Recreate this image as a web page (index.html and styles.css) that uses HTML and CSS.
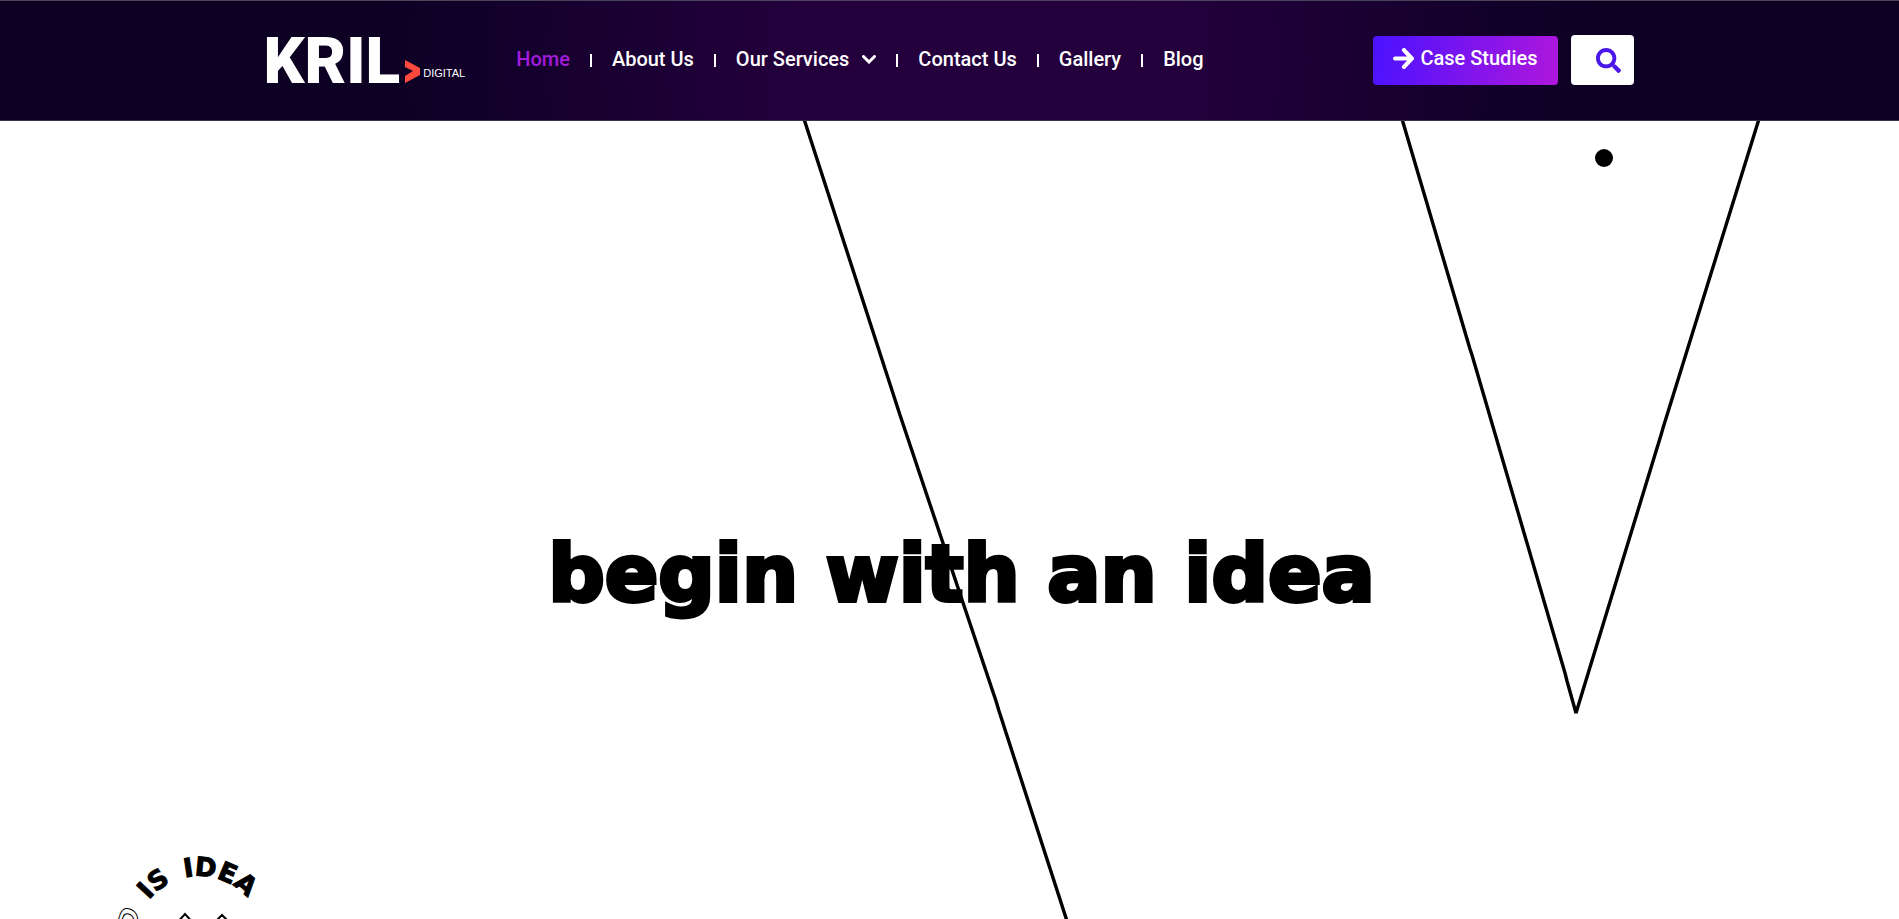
FILE: index.html
```html
<!DOCTYPE html>
<html lang="en">
  <head>
    <meta charset="UTF-8" />
    <meta name="viewport" content="width=device-width, initial-scale=1.0" />
    <title>Kril Digital</title>
    <link rel="stylesheet" href="styles.css">
  </head>
  <body>
    <!-- Header -->
    <header class="header">
      <div class="container">
        <a href="#" class="logo">
          <span class="logo-name">KRIL</span>
          <svg class="logo-arrow" viewBox="0 0 15 23" aria-hidden="true">
            <path d="M0 0 L15 8 V15 L0 23 V16 L8 11 L0 7 Z" />
          </svg>
          <span class="logo-sub">DIGITAL</span>
        </a>

        <nav class="nav">
          <ul>
            <li><a href="#" class="active">Home</a></li>
            <li><a href="#">About Us</a></li>
            <li>
              <a href="#">Our Services
                <svg class="caret" viewBox="0 0 14 9" aria-hidden="true"><path d="M1.5 1.5 L7 7 L12.5 1.5" /></svg>
              </a>
            </li>
            <li><a href="#">Contact Us</a></li>
            <li><a href="#">Gallery</a></li>
            <li><a href="#">Blog</a></li>
          </ul>
        </nav>

        <div class="actions">
          <a href="#" class="btn-case">
            <svg viewBox="0 0 20 20" aria-hidden="true"><path d="M2 10 H17 M10.5 2 L18 10 L10.5 18" /></svg>
            Case Studies
          </a>
          <button type="button" class="btn-search" aria-label="Search">
            <svg viewBox="0 0 512 512" aria-hidden="true">
              <path d="M505 442.700 405.300 343c-4.500-4.500-10.600-7-17-7H372c27.600-35.300 44-79.700 44-128C416 93.100 322.900 0 208 0S0 93.100 0 208s93.100 208 208 208c48.300 0 92.700-16.400 128-44v16.300c0 6.400 2.500 12.500 7 17l99.700 99.700c9.400 9.400 24.600 9.400 33.900 0l28.300-28.300c9.400-9.400 9.400-24.600.1-34zM208 336c-70.700 0-128-57.200-128-128 0-70.700 57.200-128 128-128 70.700 0 128 57.200 128 128 0 70.700-57.200 128-128 128z" />
            </svg>
          </button>
        </div>
      </div>
    </header>

    <!-- Hero -->
    <main class="hero">
      <svg class="hero-art" viewBox="0 0 1899 798" preserveAspectRatio="xMidYMin slice" aria-hidden="true">
        <g class="hero-lines" stroke-width="3.4">
          <path d="M804 -2 L900 294 L902 300 L996 580 L999 590 L1067 800" />
          <path d="M1402 -2 L1470 228 L1472 234 L1565 552 L1567 560 L1576 592 L1661 314 L1663 307 L1759 -2" />
        </g>
        <circle cx="1604" cy="37" r="9" />

        <!-- Round badge, continues below the fold -->
        <path id="ring" class="ring" d="M135 819 A64 64 0 0 1 263 819" />
        <text class="badge-bold"><textPath href="#ring" startOffset="43">IS</textPath></text>
        <text class="badge-bold"><textPath href="#ring" startOffset="86">IDEA</textPath></text>
        <text class="badge-outline"><textPath href="#ring" startOffset="8">D</textPath></text>
        <path class="badge-icon" d="M175 804 L185 793 L195 804 M212 804 L222 794 L232 804" />
      </svg>
      <h1>begin with an idea</h1>
    </main>
  </body>
</html>
```
FILE: styles.css
```css
* {
  margin: 0;
  padding: 0;
  box-sizing: border-box;
}

body {
  font-family: Roboto, sans-serif;
  background-color: #fff;
  color: #000;
  min-height: 100vh;
  display: flex;
  flex-direction: column;
}

a {
  color: inherit;
  text-decoration: none;
}

/* --- Header --- */
.header {
  border-top: 1px solid #4a4458;
  border-bottom: 1px solid #3a3448;
  padding: 34px 16px 35px;
  background: radial-gradient(circle at 52% 50%, #24003d 0, #23003c 200px, #0c0023 620px);
  color: #fff;
}
.container {
  max-width: 1368px;
  margin: 0 auto;
  display: flex;
  align-items: center;
}

/* --- Logo --- */
.logo {
  display: flex;
  align-items: flex-end;
  margin: 0 31px 0 -2px;
}
.logo-name {
  font-size: 64px;
  font-weight: 900;
  line-height: 46px;
  padding-top: 4px;
}
.logo-arrow {
  width: 15px;
  height: 23px;
  margin: 0 3px 2px 5px;
  fill: #ff4a3d;
}
.logo-sub {
  font-family: "Liberation Sans", sans-serif;
  font-size: 11px;
  line-height: 12px;
  padding-bottom: 6px;
}

/* --- Navigation --- */
.nav ul {
  display: flex;
  list-style: none;
}
.nav li {
  display: flex;
  align-items: center;
}
.nav li + li::before {
  content: "";
  width: 2px;
  height: 13px;
  background-color: #fff;
}
.nav a {
  display: flex;
  align-items: center;
  padding: 0 20px 2px;
  font-size: 20px;
  font-weight: 500;
  line-height: 24px;
}
.nav a.active {
  color: #a31bdc;
}
.caret {
  width: 14px;
  height: 9px;
  margin-left: 13px;
  fill: none;
  stroke: #fff;
  stroke-width: 3;
  stroke-linecap: round;
}

/* --- Buttons on the right --- */
.actions {
  display: flex;
  align-items: center;
  gap: 13px;
  margin-left: auto;
}
.btn-case {
  display: flex;
  align-items: center;
  gap: 6px;
  height: 49px;
  padding: 0 20px 4px;
  border-radius: 4px;
  background: linear-gradient(100deg, #4a12ff, #af17dc);
  font-size: 20px;
  font-weight: 500;
}
.btn-case svg {
  width: 21px;
  height: 21px;
  fill: none;
  stroke: #fff;
  stroke-width: 4;
  stroke-linecap: round;
}
.btn-search {
  width: 63px;
  height: 50px;
  padding-left: 12px;
  border: none;
  border-radius: 4px;
  background-color: #fff;
  cursor: pointer;
}
.btn-search svg {
  width: 25px;
  height: 25px;
  fill: #4a17e8;
  vertical-align: middle;
}

/* --- Hero --- */
.hero {
  position: relative;
  flex: 1;
  display: flex;
  align-items: center;
  justify-content: center;
  padding: 108px 0 0 24px;
  overflow: hidden;
}
.hero h1 {
  position: relative;
  font-family: "DejaVu Sans", sans-serif;
  font-size: 79px;
  font-weight: 700;
  line-height: 96px;
  -webkit-text-stroke: 4px #000;
}
.hero-art {
  position: absolute;
  top: 0;
  left: 0;
  width: 100%;
  height: 100%;
}
.hero-lines path {
  fill: none;
  stroke: #000;
  stroke-linejoin: bevel;
}
.ring {
  fill: none;
}
.badge-bold,
.badge-outline {
  font-family: "DejaVu Sans", sans-serif;
  font-size: 26px;
  font-weight: 700;
  stroke: #000;
  stroke-width: 1;
}
.badge-outline {
  fill: none;
  font-style: oblique;
}
.badge-icon {
  fill: none;
  stroke: #000;
  stroke-width: 2;
}
```
